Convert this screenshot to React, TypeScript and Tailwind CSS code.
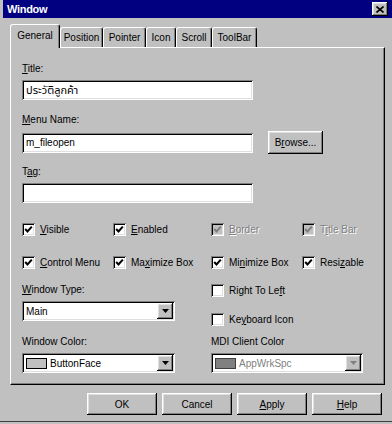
import type { ReactNode } from 'react'

const raised =
  'bg-[#c0c0c0] shadow-[inset_-1px_-1px_#000,inset_1px_1px_#fff,inset_-2px_-2px_#808080,inset_2px_2px_#dfdfdf]'
const sunken =
  'bg-white shadow-[inset_1px_1px_#808080,inset_-1px_-1px_#fff,inset_2px_2px_#000,inset_-2px_-2px_#dfdfdf]'

function U({ children }: { children: ReactNode }) {
  return <span className="underline underline-offset-[1px]">{children}</span>
}

function CheckBox({
  checked,
  disabled,
  children,
  width,
}: {
  checked?: boolean
  disabled?: boolean
  children: ReactNode
  width?: string
}) {
  return (
    <div className={`flex items-center gap-[5px] h-[13px] ${width ?? ''}`}>
      <div
        className={`w-[13px] h-[13px] shrink-0 flex items-center justify-center ${
          disabled
            ? 'bg-[#c0c0c0] shadow-[inset_1px_1px_#808080,inset_-1px_-1px_#fff,inset_2px_2px_#000,inset_-2px_-2px_#dfdfdf]'
            : sunken
        }`}
      >
        {checked && (
          <svg width="9" height="9" viewBox="0 0 9 9">
            <polyline
              points="1.2,4 3.5,6.5 7.8,1.6"
              fill="none"
              stroke={disabled ? '#808080' : '#000'}
              strokeWidth="2"
            />
          </svg>
        )}
      </div>
      <span
        className={`whitespace-nowrap leading-[13px] ${
          disabled ? 'text-[#808080] [text-shadow:1px_1px_#fff]' : 'text-black'
        }`}
      >
        {children}
      </span>
    </div>
  )
}

function Combo({
  children,
  width,
  disabled,
}: {
  children: ReactNode
  width: string
  disabled?: boolean
}) {
  return (
    <div className={`${sunken} ${width} h-[20px] flex items-center pl-[4px] pr-[2px]`}>
      <div className={`flex-1 flex items-center gap-[3px] ${disabled ? 'text-[#808080]' : 'text-black'}`}>
        {children}
      </div>
      <div className={`${raised} w-[16px] h-[16px] flex items-center justify-center`}>
        <svg width="7" height="4" viewBox="0 0 7 4">
          <polygon points="0,0 7,0 3.5,4" fill={disabled ? '#808080' : '#000'} />
        </svg>
      </div>
    </div>
  )
}

function Tab({ label, width, active }: { label: string; width: string; active?: boolean }) {
  return (
    <div
      className={`${width} flex items-center justify-center bg-[#c0c0c0] border-t border-l border-white border-r border-r-black rounded-tl-[3px] rounded-tr-[3px] shadow-[inset_-1px_0_#808080] ${
        active ? 'h-[24px] -mb-px relative z-10 pb-[3px]' : 'h-[20px]'
      }`}
    >
      {label}
    </div>
  )
}

function Button({ children }: { children: ReactNode }) {
  return (
    <div className={`${raised} w-[70px] h-[22px] flex items-center justify-center`}>{children}</div>
  )
}

export default function App() {
  return (
    <div className="w-[392px] h-[424px] bg-[#c0c0c0] overflow-hidden text-[10px] text-black font-['Liberation_Sans','Noto_Sans_Thai','Noto_Sans',sans-serif]">
      <div className="h-[18px] ml-[3px] bg-[#000080] flex items-center justify-between pl-[4px] pr-[4px]">
        <span className="text-white font-bold text-[11px] tracking-[-0.3px]">Window</span>
        <div className={`${raised} w-[16px] h-[14px] flex items-center justify-center`}>
          <svg width="8" height="7" viewBox="0 0 8 7">
            <path d="M0.5 0.5 L7.5 6.5 M7.5 0.5 L0.5 6.5" stroke="#000" strokeWidth="1.6" />
          </svg>
        </div>
      </div>

      <div className="ml-[10px] mt-[6px] h-[23px] flex items-end">
        <Tab label="General" width="w-[50px]" active />
        <Tab label="Position" width="w-[43px]" />
        <Tab label="Pointer" width="w-[43px]" />
        <Tab label="Icon" width="w-[30px]" />
        <Tab label="Scroll" width="w-[36px]" />
        <Tab label="ToolBar" width="w-[45px]" />
      </div>

      <div className="ml-[10px] w-[375px] h-[338px] border-t border-l border-white border-r border-b border-r-black border-b-black shadow-[inset_-1px_-1px_#808080] pl-[11px] pt-[14px]">
        <div className="h-[13px] leading-[13px]">
          <U>T</U>itle:
        </div>
        <div className={`${sunken} mt-[5px] w-[231px] h-[20px] flex items-center pl-[4px] text-[11px]`}>
          ประวัติลูกค้า
        </div>

        <div className="mt-[13px] h-[13px] leading-[13px]">
          <U>M</U>enu Name:
        </div>
        <div className="mt-[5px] flex items-center">
          <div className={`${sunken} w-[231px] h-[20px] flex items-center pl-[4px]`}>m_fileopen</div>
          <div className={`${raised} ml-[15px] w-[55px] h-[23px] flex items-center justify-center`}>
            B<U>r</U>owse...
          </div>
        </div>

        <div className="mt-[11px] h-[13px] leading-[13px]">
          T<U>a</U>g:
        </div>
        <div className={`${sunken} mt-[5px] w-[231px] h-[20px]`} />

        <div className="mt-[20px] flex">
          <CheckBox checked width="w-[91px]">
            <U>V</U>isible
          </CheckBox>
          <CheckBox checked width="w-[98px]">
            <U>E</U>nabled
          </CheckBox>
          <CheckBox checked disabled width="w-[91px]">
            <U>B</U>order
          </CheckBox>
          <CheckBox checked disabled>
            T<U>i</U>tle Bar
          </CheckBox>
        </div>

        <div className="mt-[20px] flex">
          <CheckBox checked width="w-[91px]">
            <U>C</U>ontrol Menu
          </CheckBox>
          <CheckBox checked width="w-[98px]">
            Ma<U>x</U>imize Box
          </CheckBox>
          <CheckBox checked width="w-[91px]">
            Mi<U>n</U>imize Box
          </CheckBox>
          <CheckBox checked>
            Resi<U>z</U>able
          </CheckBox>
        </div>

        <div className="flex">
          <div className="w-[189px] flex flex-col">
            <div className="mt-[14px] h-[13px] leading-[13px]">
              <U>W</U>indow Type:
            </div>
            <div className="mt-[5px]">
              <Combo width="w-[153px]">Main</Combo>
            </div>
            <div className="mt-[14px] h-[13px] leading-[13px]">Window Color:</div>
            <div className="mt-[5px]">
              <Combo width="w-[153px]">
                <span className="w-[21px] h-[11px] border border-black bg-[#c0c0c0]" />
                <span>ButtonFace</span>
              </Combo>
            </div>
          </div>
          <div className="flex flex-col">
            <div className="mt-[15px]">
              <CheckBox>
                Right To Le<U>f</U>t
              </CheckBox>
            </div>
            <div className="mt-[16px]">
              <CheckBox>
                Ke<U>y</U>board Icon
              </CheckBox>
            </div>
            <div className="mt-[9px] h-[13px] leading-[13px]">MDI Client Color</div>
            <div className="mt-[5px]">
              <Combo width="w-[152px]" disabled>
                <span className="w-[21px] h-[11px] border border-[#404040] bg-[#808080]" />
                <span>AppWrkSpc</span>
              </Combo>
            </div>
          </div>
        </div>
      </div>

      <div className="mt-[8px] pl-[87px] flex gap-[5px]">
        <Button>OK</Button>
        <Button>Cancel</Button>
        <Button>
          <U>A</U>pply
        </Button>
        <Button>
          <U>H</U>elp
        </Button>
      </div>
      <div className="mt-[6px] h-px bg-[#404040]" />
    </div>
  )
}
